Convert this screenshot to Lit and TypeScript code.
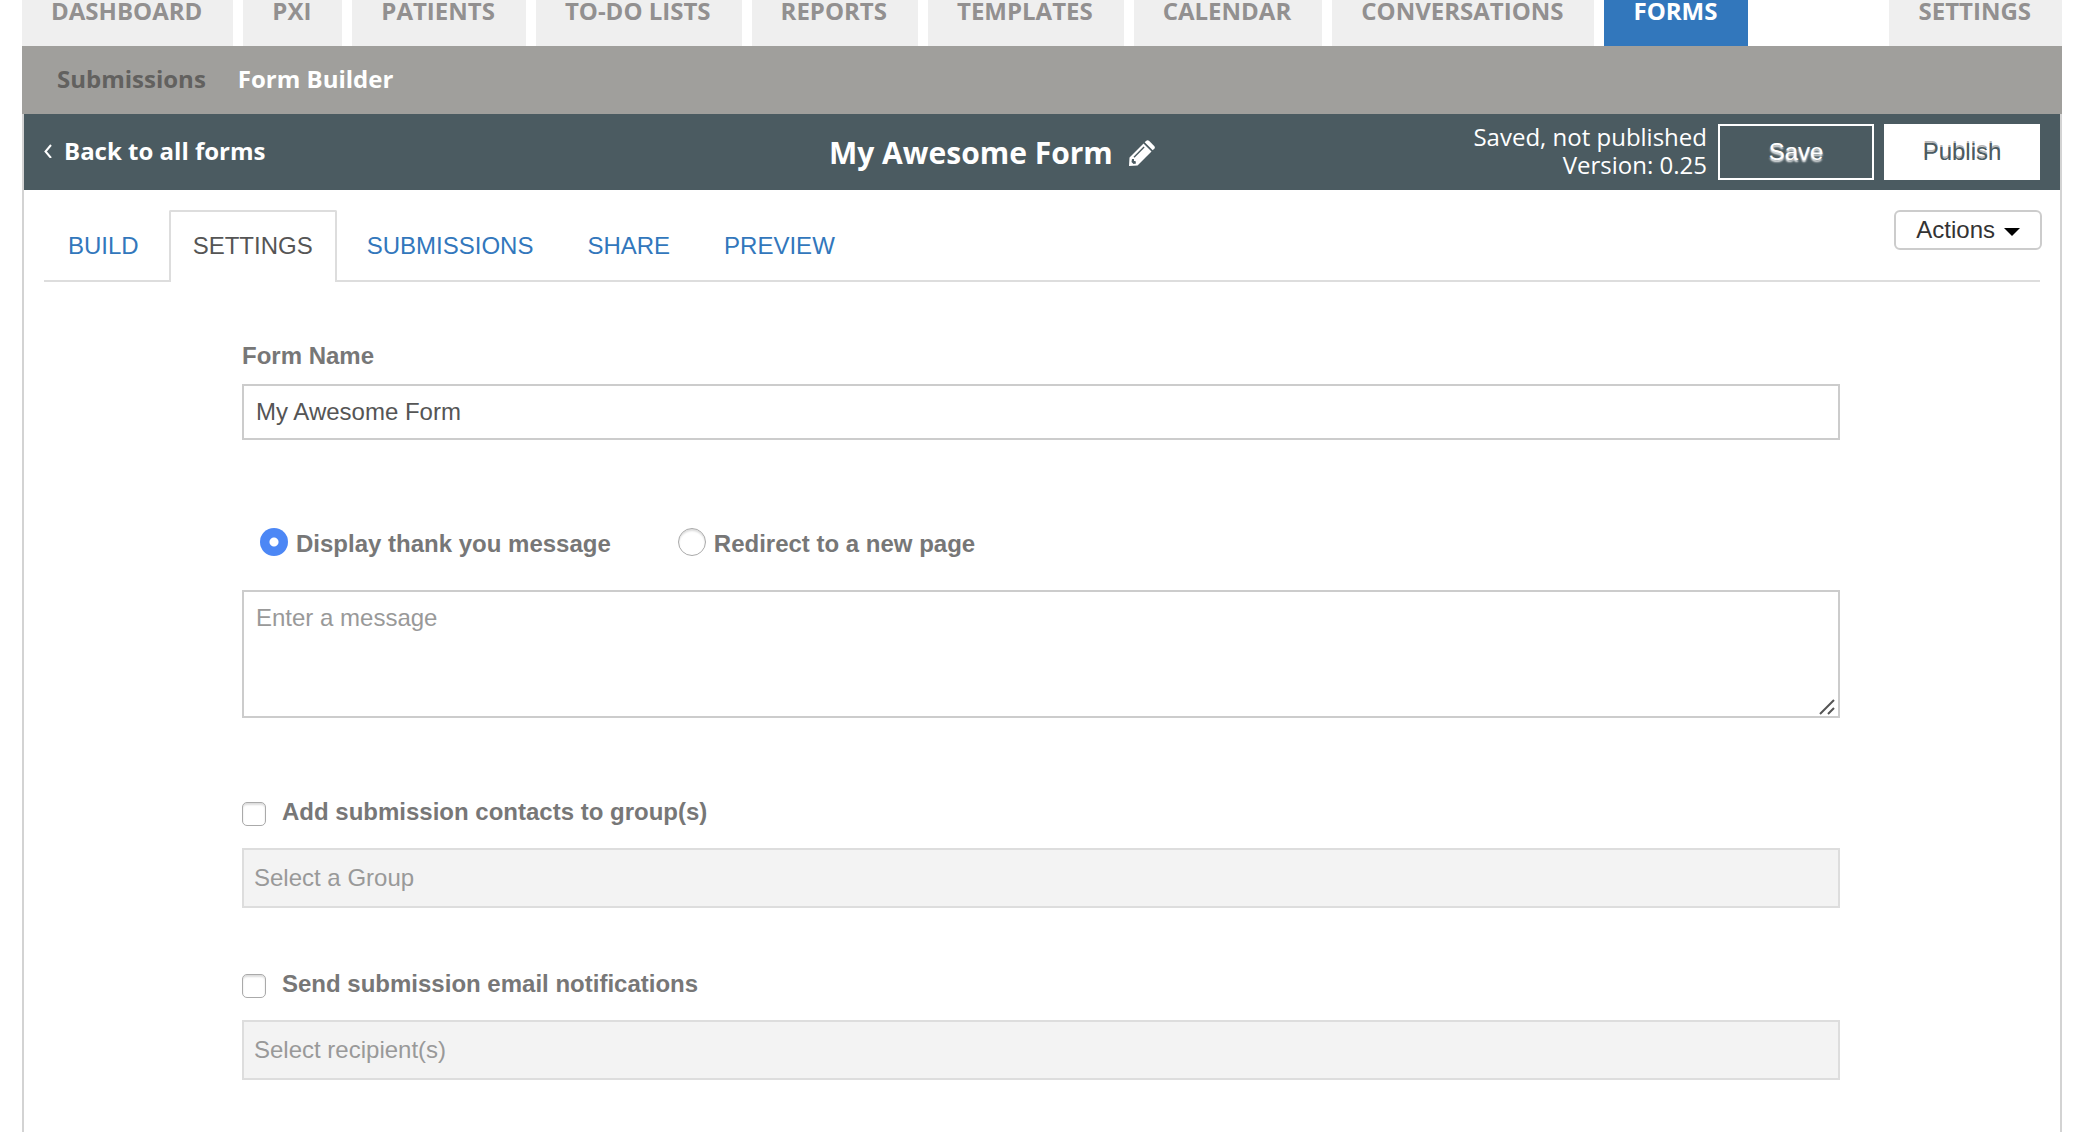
import { LitElement, html, css } from "lit";
import { customElement, state } from "lit/decorators.js";
import { classMap } from "lit/directives/class-map.js";

const NAV = [
  "DASHBOARD",
  "PXI",
  "PATIENTS",
  "TO-DO LISTS",
  "REPORTS",
  "TEMPLATES",
  "CALENDAR",
  "CONVERSATIONS",
  "FORMS",
  "SETTINGS",
];

const TABS = ["BUILD", "SETTINGS", "SUBMISSIONS", "SHARE", "PREVIEW"];

@customElement("app-root")
export class AppRoot extends LitElement {
  @state() private tab = "SETTINGS";

  static styles = css`
    :host {
      display: block;
      min-height: 100vh;
      background: #fff;
      font: 24px/32px "Liberation Sans", Arial, sans-serif;
      color: #555;
    }
    *,
    *::before,
    *::after {
      box-sizing: border-box;
    }
    a {
      color: inherit;
      text-decoration: none;
    }
    button,
    input,
    textarea {
      font: inherit;
      margin: 0;
    }
    .page {
      display: flex;
      flex-direction: column;
      min-height: 100vh;
      padding: 0 34px 0 22px;
    }
    .nav,
    .subnav,
    .bar {
      font-family: "Open Sans", sans-serif;
      font-weight: 700;
    }
    .nav {
      display: flex;
      gap: 10px;
      line-height: 22px;
    }
    .nav-item {
      padding: 0 31px 24px 29px;
      background: #efefef;
      color: #929090;
    }
    .nav-item.current {
      background: #3277bc;
      color: #fff;
    }
    .nav-item:last-child {
      margin-left: auto;
    }
    .subnav {
      display: flex;
      align-items: center;
      gap: 32px;
      height: 68px;
      padding: 0 35px 2px;
      background: #a09f9c;
      color: #fff;
    }
    .muted {
      color: #62615f;
    }
    .panel {
      flex: 1;
      border: solid #d3d3d3;
      border-width: 0 2px;
    }
    .bar {
      display: grid;
      grid-template-columns: 47fr auto 53fr;
      align-items: center;
      height: 76px;
      padding: 0 20px;
      background: #4b5b61;
      color: #fff;
    }
    .back {
      display: flex;
      align-items: center;
      gap: 12px;
      padding-bottom: 2px;
    }
    .title {
      display: flex;
      align-items: center;
      gap: 16px;
      margin: 0;
      padding-top: 2px;
      font-size: 30px;
      line-height: 40px;
    }
    .icon-button {
      display: flex;
      padding: 0;
      border: 0;
      background: none;
      color: inherit;
    }
    .publish-area {
      display: flex;
      align-items: center;
      justify-content: flex-end;
      gap: 10px;
    }
    .status {
      margin: 0;
      padding: 0 1px 2px 0;
      font-weight: 400;
      line-height: 28px;
      text-align: right;
    }
    .button {
      width: 156px;
      height: 56px;
      padding: 0;
      border: 2px solid #fff;
      background: #4b5b61;
      color: #fff;
      font: 24px/32px "Liberation Sans", Arial, sans-serif;
      text-shadow: 0 2px 2px #fff;
    }
    .button.primary {
      background: #fff;
      color: #4b5b61;
      text-shadow: 0 -2px 0 rgba(0, 0, 0, 0.3);
    }
    .toolbar {
      display: flex;
      align-items: flex-start;
      justify-content: space-between;
      margin: 20px 20px 0;
      border-bottom: 2px solid #ddd;
    }
    .tabs {
      display: flex;
      gap: 6px;
      margin-bottom: -2px;
    }
    .tab {
      height: 72px;
      padding: 0 22px 2px;
      border: solid transparent;
      border-width: 2px 2px 0;
      background: none;
      color: #3277bc;
    }
    .tab.current {
      border-color: #ddd;
      border-radius: 2px 2px 0 0;
      background: #fff;
      color: #555;
    }
    .actions {
      display: flex;
      align-items: center;
      gap: 9px;
      height: 40px;
      margin-right: -2px;
      padding: 0 20px;
      border: 2px solid #ccc;
      border-radius: 6px;
      background: #fff;
      color: #333;
    }
    .caret {
      margin-top: 4px;
    }
    .form {
      display: flex;
      flex-direction: column;
      padding: 58px 220px 52px 218px;
    }
    .label {
      color: #777;
      font-weight: 700;
    }
    .field {
      width: 100%;
      height: 56px;
      margin-top: 12px;
      padding: 0 12px;
      border: 2px solid #ccc;
      border-radius: 0;
      background: #fff;
      color: #555;
      outline: 0;
    }
    .field::placeholder {
      color: #999;
      opacity: 1;
    }
    .field:disabled {
      height: 60px;
      margin-top: 20px;
      padding: 0 10px;
      border-color: #ddd;
      background: #f3f3f3;
    }
    .message {
      position: relative;
      display: flex;
      margin-top: 30px;
    }
    .message .field {
      height: 128px;
      margin: 0;
      padding: 10px 12px;
      resize: vertical;
    }
    .field::-webkit-resizer {
      display: none;
    }
    .grip {
      position: absolute;
      right: 5px;
      bottom: 3px;
      pointer-events: none;
    }
    .options {
      display: flex;
      gap: 67px;
      margin-top: 88px;
      padding-left: 18px;
    }
    .option {
      display: flex;
      align-items: flex-start;
      gap: 8px;
    }
    .radio,
    .check {
      flex: none;
      appearance: none;
      width: 28px;
      height: 28px;
      border: 1px solid #aaa;
      border-radius: 50%;
      background: #fff;
      box-shadow: inset 0 2px 2px #ddd;
    }
    .radio:checked {
      border: 0;
      background: radial-gradient(circle, #fff 4px, #4c87f5 5px);
      box-shadow: none;
    }
    .check {
      width: 24px;
      height: 24px;
      margin-bottom: 2px;
      border-radius: 5px;
    }
    .toggle {
      display: flex;
      align-items: flex-end;
      gap: 16px;
    }
    .group {
      margin-top: 78px;
    }
    .group + .group {
      margin-top: 60px;
    }
  `;

  render() {
    return html`
      <div class="page">
        <nav class="nav" aria-label="Main">
          ${NAV.map(
            (name) => html`<a
              href="#"
              class=${classMap({ "nav-item": true, current: name === "FORMS" })}
              >${name}</a
            >`
          )}
        </nav>
        <nav class="subnav" aria-label="Forms">
          <a href="#" class="muted">Submissions</a>
          <a href="#">Form Builder</a>
        </nav>
        <main class="panel">
          <header class="bar">
            <a href="#" class="back">
              <svg width="8" height="14" viewBox="0 0 8 14" fill="none" stroke="currentColor" stroke-width="2">
                <path d="M7 1 1.500 7.500 7 14" />
              </svg>
              Back to all forms
            </a>
            <h1 class="title">
              My Awesome Form
              <button class="icon-button" aria-label="Rename form">
                <svg width="26" height="26" viewBox="0 0 26 26" fill="currentColor">
                  <path fill-rule="evenodd" d="M14.500 3.500 22.500 11.500 8.500 25.500 0 26 .5 17.500ZM14.600 6.600 4.500 16.700 5.500 17.700 15.600 7.600ZM3 19 2.500 22 4.500 24 7 23.500 6.500 21 5 21 5 19Z" />
                  <path d="M15.700 2.300 17.300 .7Q18.600-.4 20 .8L25.200 6Q26.500 7.400 25.300 8.700L23.700 10.300Z" />
                </svg>
              </button>
            </h1>
            <div class="publish-area">
              <p class="status">Saved, not published<br />Version: 0.25</p>
              <button class="button">Save</button>
              <button class="button primary">Publish</button>
            </div>
          </header>
          <div class="toolbar">
            <div class="tabs" role="tablist">
              ${TABS.map(
                (name) => html`<button
                  role="tab"
                  aria-selected=${name === this.tab}
                  class=${classMap({ tab: true, current: name === this.tab })}
                  @click=${() => (this.tab = name)}
                >
                  ${name}
                </button>`
              )}
            </div>
            <button class="actions">
              Actions
              <svg class="caret" width="16" height="8" viewBox="0 0 16 8"><path d="M0 0h16L8 8Z" fill="#000" /></svg>
            </button>
          </div>
          <form class="form">
            <label class="label" for="name">Form Name</label>
            <input class="field" id="name" type="text" value="My Awesome Form" />
            <div class="options">
              <label class="label option">
                <input class="radio" type="radio" name="after" checked />
                Display thank you message
              </label>
              <label class="label option">
                <input class="radio" type="radio" name="after" />
                Redirect to a new page
              </label>
            </div>
            <div class="message">
              <textarea class="field" aria-label="Message" placeholder="Enter a message"></textarea>
              <svg class="grip" width="16" height="16" viewBox="0 0 16 16" stroke="#555" stroke-width="2">
                <path d="M1 15 15 1M9 15l6-6" />
              </svg>
            </div>
            <div class="group">
              <label class="label toggle">
                <input class="check" type="checkbox" />
                Add submission contacts to group(s)
              </label>
              <input class="field" type="text" aria-label="Group" placeholder="Select a Group" disabled />
            </div>
            <div class="group">
              <label class="label toggle">
                <input class="check" type="checkbox" />
                Send submission email notifications
              </label>
              <input class="field" type="text" aria-label="Recipients" placeholder="Select recipient(s)" disabled />
            </div>
          </form>
        </main>
      </div>
    `;
  }
}
